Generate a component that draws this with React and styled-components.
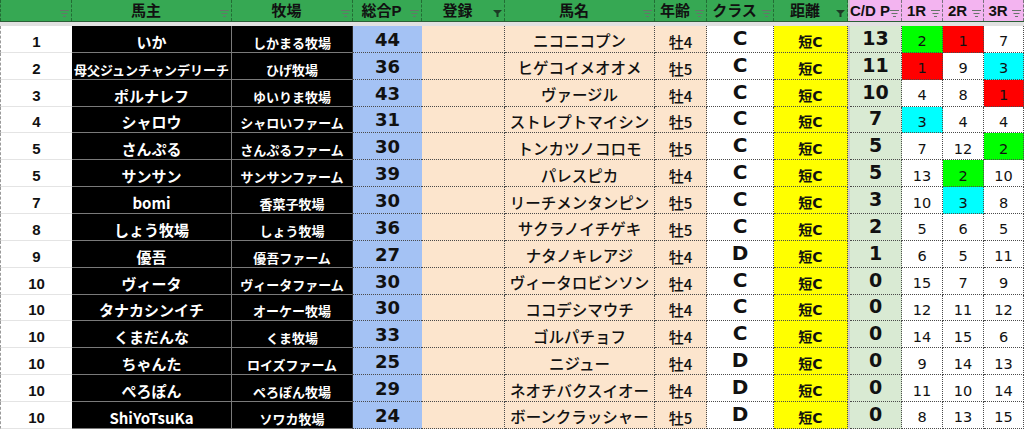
import React from 'react';
import styled, { createGlobalStyle, css } from 'styled-components';

const GlobalStyle = createGlobalStyle`
  html, body {
    margin: 0;
    padding: 0;
    background: #ffffff;
    overflow: hidden;
  }
`;

const JP = `"Noto Sans CJK JP", "Noto Sans", sans-serif`;
const LATIN_JP = `"DejaVu Sans", "Noto Sans CJK JP", sans-serif`;
const ARIAL_JP = `"Liberation Sans", "Noto Sans CJK JP", sans-serif`;

// 列幅（スプレッドシートの列に合わせる）
const COLS = '72px 160px 121px 69px 83px 150px 52px 67px 74px 2px 52px 41px 41px 40px';

const Sheet = styled.div`
  width: 1024px;
  height: 429px;
  overflow: hidden;
  background: #ffffff;
`;

const HeaderRow = styled.div`
  display: grid;
  grid-template-columns: ${COLS};
  height: 21px;
  border-bottom: 1px solid #2b5e37;
`;

const FreezeBar = styled.div`
  height: 4px;
  background: #e1e1e1;
`;

const headerTones = {
  green: '#36a853',
  pink: '#f3b4f0',
  gap: '#c9c9c9',
};

const HeaderCell = styled.div`
  box-sizing: border-box;
  display: flex;
  align-items: center;
  background: ${(p) => headerTones[p.$tone]};
  border-right: ${(p) => (p.$tone === 'gap' ? 'none' : '1px dashed rgba(20, 60, 30, 0.55)')};
  border-left: ${(p) => (p.$first ? '1px dashed rgba(20, 60, 30, 0.55)' : 'none')};
  padding-right: 2px;
  overflow: hidden;
`;

const HeaderLabel = styled.span`
  flex: 1;
  text-align: center;
  white-space: nowrap;
  font-family: ${ARIAL_JP};
  font-weight: 700;
  font-size: 15px;
  line-height: 1;
  color: #111111;
`;

const FilterIcon = styled.svg`
  flex: none;
  width: 9px;
  height: 7px;
  margin-top: 5px;
`;

function Filter({ active }) {
  if (active) {
    return (
      <FilterIcon viewBox="0 0 9 7">
        <path d="M0 0 H9 L5.5 3.5 V7 H3.5 V3.5 Z" fill="#1d3b25" />
      </FilterIcon>
    );
  }
  return (
    <FilterIcon viewBox="0 0 9 7">
      <rect x="0" y="0" width="9" height="1" fill="#66756a" />
      <rect x="1.5" y="3" width="6" height="1" fill="#66756a" />
      <rect x="3" y="6" width="3" height="1" fill="#66756a" />
    </FilterIcon>
  );
}

const Body = styled.div`
  display: grid;
  grid-auto-rows: 26.87px;
`;

const Row = styled.div`
  display: grid;
  grid-template-columns: ${COLS};
`;

const dotted = css`
  border-bottom: 1px dotted #4a4a4a;
  border-right: 1px dotted #4a4a4a;
`;

const kinds = {
  rank: css`
    background: #ffffff;
    color: #111111;
    font-family: ${ARIAL_JP};
    font-weight: 700;
    font-size: 15px;
    border-left: 1px dashed #9a9a9a;
    border-bottom: 1px solid #e4e4e4;
  `,
  owner: css`
    background: #000000;
    color: #ffffff;
    font-family: ${JP};
    font-weight: 700;
    font-size: ${(p) => (p.$small ? '13px' : '15px')};
    border-right: 1px solid #7a7a7a;
    border-bottom: 1px solid #7a7a7a;
  `,
  farm: css`
    background: #000000;
    color: #ffffff;
    font-family: ${JP};
    font-weight: 700;
    font-size: 13px;
    border-right: 1px solid #2a2a2a;
    border-bottom: 1px solid #7a7a7a;
  `,
  total: css`
    background: #a4c2f4;
    color: #111111;
    font-family: ${LATIN_JP};
    font-weight: 700;
    font-size: 18px;
    border-bottom: 1px dotted #4a4a4a;
  `,
  reg: css`
    background: #fce5cd;
    ${dotted}
  `,
  horse: css`
    background: #fce5cd;
    color: #111111;
    font-family: ${JP};
    font-weight: 500;
    font-size: 15.5px;
    ${dotted}
  `,
  age: css`
    background: #fce5cd;
    color: #111111;
    font-family: ${JP};
    font-weight: 500;
    font-size: 15px;
    ${dotted}
  `,
  cls: css`
    background: #ffffff;
    color: #111111;
    font-family: ${LATIN_JP};
    font-weight: 700;
    font-size: 20px;
    padding-bottom: 4px;
    ${dotted}
  `,
  dist: css`
    background: #ffff00;
    color: #111111;
    font-family: ${LATIN_JP};
    font-weight: 700;
    font-size: 14px;
    ${dotted}
  `,
  gap: css`
    background: #cdcdcd;
  `,
  cdp: css`
    background: #d9ead3;
    color: #111111;
    font-family: ${LATIN_JP};
    font-weight: 700;
    font-size: 19px;
    padding-bottom: 4px;
    ${dotted}
  `,
  race: css`
    color: #111111;
    font-family: ${LATIN_JP};
    font-size: 14.5px;
    ${dotted}
  `,
};

const raceTones = {
  green: '#00ff00',
  red: '#ff0000',
  cyan: '#00ffff',
};

const Cell = styled.div`
  box-sizing: border-box;
  display: flex;
  align-items: flex-end;
  justify-content: center;
  padding-bottom: 3px;
  line-height: 1;
  white-space: nowrap;
  overflow: hidden;
  ${(p) => kinds[p.$kind]}
  ${(p) => p.$kind === 'race' && css`
    background: ${raceTones[p.$tone] || '#ffffff'};
  `}
`;

const headers = [
  { label: '', tone: 'green' },
  { label: '馬主', tone: 'green' },
  { label: '牧場', tone: 'green' },
  { label: '総合P', tone: 'green' },
  { label: '登録', tone: 'green', active: true },
  { label: '馬名', tone: 'green' },
  { label: '年齢', tone: 'green' },
  { label: 'クラス', tone: 'green' },
  { label: '距離', tone: 'green', active: true },
  { label: null, tone: 'gap' },
  { label: 'C/D P', tone: 'pink' },
  { label: '1R', tone: 'pink' },
  { label: '2R', tone: 'pink' },
  { label: '3R', tone: 'pink' },
];

// [順位, 馬主, 牧場, 総合P, 馬名, 年齢, クラス, C/D P, 1R, 2R, 3R]
const rows = [
  ['1', 'いか', 'しかまる牧場', 44, 'ニコニコプン', '牡4', 'C', 13, [2, 'green'], [1, 'red'], [7]],
  ['2', '母父ジュンチャンデリーチ', 'ひげ牧場', 36, 'ヒゲコイメオオメ', '牡5', 'C', 11, [1, 'red'], [9], [3, 'cyan']],
  ['3', 'ポルナレフ', 'ゆいりま牧場', 43, 'ヴァージル', '牡4', 'C', 10, [4], [8], [1, 'red']],
  ['4', 'シャロウ', 'シャロいファーム', 31, 'ストレプトマイシン', '牡5', 'C', 7, [3, 'cyan'], [4], [4]],
  ['5', 'さんぷる', 'さんぷるファーム', 30, 'トンカツノコロモ', '牡5', 'C', 5, [7], [12], [2, 'green']],
  ['5', 'サンサン', 'サンサンファーム', 39, 'パレスピカ', '牡4', 'C', 5, [13], [2, 'green'], [10]],
  ['7', 'bomi', '香菜子牧場', 30, 'リーチメンタンピン', '牡5', 'C', 3, [10], [3, 'cyan'], [8]],
  ['8', 'しょう牧場', 'しょう牧場', 36, 'サクラノイチゲキ', '牡5', 'C', 2, [5], [6], [5]],
  ['9', '優吾', '優吾ファーム', 27, 'ナタノキレアジ', '牡4', 'D', 1, [6], [5], [11]],
  ['10', 'ヴィータ', 'ヴィータファーム', 30, 'ヴィータロビンソン', '牡4', 'C', 0, [15], [7], [9]],
  ['10', 'タナカシンイチ', 'オーケー牧場', 30, 'ココデシマウチ', '牡4', 'C', 0, [12], [11], [12]],
  ['10', 'くまだんな', 'くま牧場', 33, 'ゴルパチョフ', '牡4', 'C', 0, [14], [15], [6]],
  ['10', 'ちゃんた', 'ロイズファーム', 25, 'ニジュー', '牡4', 'D', 0, [9], [14], [13]],
  ['10', 'ぺろぽん', 'ぺろぽん牧場', 29, 'ネオチバクスイオー', '牡4', 'D', 0, [11], [10], [14]],
  ['10', 'ShiYoTsuKa', 'ソワカ牧場', 24, 'ボーンクラッシャー', '牡5', 'D', 0, [8], [13], [15]],
];

export default function App() {
  return (
    <>
      <GlobalStyle />
      <Sheet>
        <HeaderRow>
          {headers.map((h, i) => (
            <HeaderCell key={i} $tone={h.tone} $first={i === 0}>
              {h.label !== null && <HeaderLabel>{h.label}</HeaderLabel>}
              {h.label !== null && <Filter active={h.active} />}
            </HeaderCell>
          ))}
        </HeaderRow>
        <FreezeBar />
        <Body>
          {rows.map((r, i) => {
            const [rank, owner, farm, total, horse, age, cls, cdp, r1, r2, r3] = r;
            return (
              <Row key={i}>
                <Cell $kind="rank">{rank}</Cell>
                <Cell $kind="owner" $small={owner.length > 10}>{owner}</Cell>
                <Cell $kind="farm">{farm}</Cell>
                <Cell $kind="total">{total}</Cell>
                <Cell $kind="reg" />
                <Cell $kind="horse">{horse}</Cell>
                <Cell $kind="age">{age}</Cell>
                <Cell $kind="cls">{cls}</Cell>
                <Cell $kind="dist">短C</Cell>
                <Cell $kind="gap" />
                <Cell $kind="cdp">{cdp}</Cell>
                {[r1, r2, r3].map(([n, tone], j) => (
                  <Cell key={j} $kind="race" $tone={tone}>{n}</Cell>
                ))}
              </Row>
            );
          })}
        </Body>
      </Sheet>
    </>
  );
}
